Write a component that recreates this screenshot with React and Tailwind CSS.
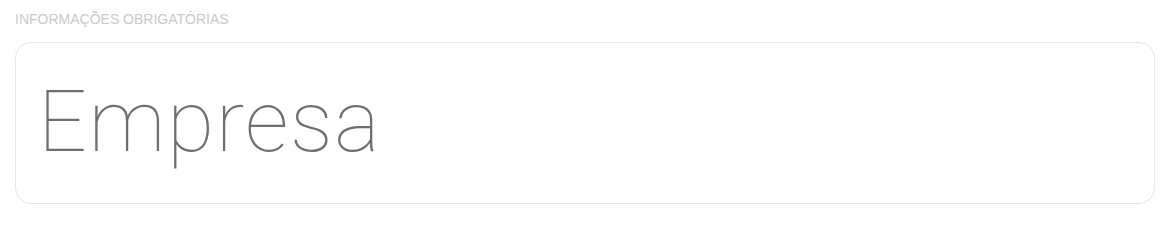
import React from 'react';

const App = () => {
  return (
    <div className="w-full bg-white pl-[15px] pr-[21px] pt-[10px] pb-1 font-['Liberation_Sans',Arial,sans-serif]">
      <p className="text-[14px] leading-[19px] uppercase text-[#c9c9c9]">Informações obrigatórias</p>
      <div className="mt-[13px] h-[162px] rounded-[16px] border border-[#e6e6e6] bg-white px-[22px] pt-[19px]">
        <h1 className="font-['Roboto',sans-serif] text-[86px] font-thin leading-[120px] tracking-[1.5px] text-[#6f6f6f]">
          Empresa
        </h1>
      </div>
    </div>
  );
};

export default App;
